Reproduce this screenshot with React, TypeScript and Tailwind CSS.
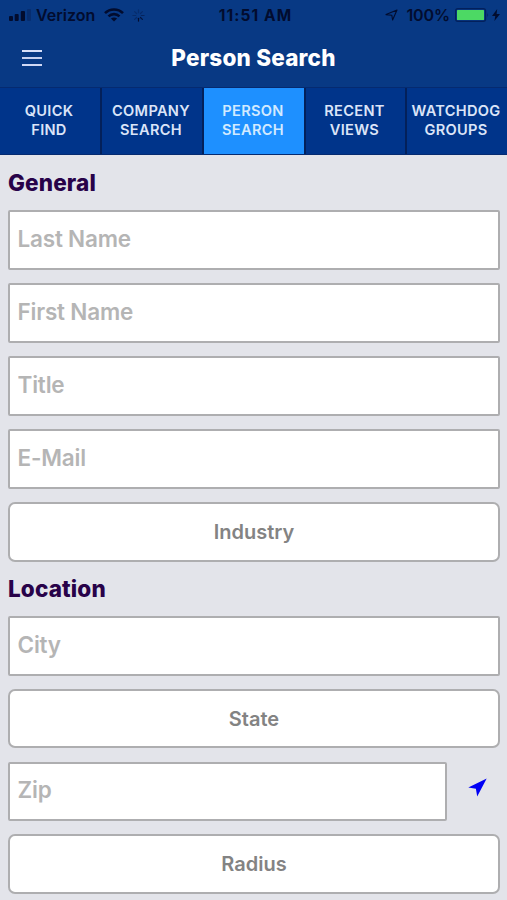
import { useState } from "react";
import clsx from "clsx";

const TABS = [
  ["QUICK", "FIND"],
  ["COMPANY", "SEARCH"],
  ["PERSON", "SEARCH"],
  ["RECENT", "VIEWS"],
  ["WATCHDOG", "GROUPS"],
];

function StatusBar() {
  return (
    <div className="flex h-[30px] items-center text-[#020c2e]">
      <div className="flex flex-1 items-center pl-[9px]">
        <svg width="23" height="12" viewBox="0 0 23 12" fill="currentColor">
          <rect x="0" y="7" width="4" height="5" rx="1" />
          <rect x="5.7" y="5" width="4" height="7" rx="1" />
          <rect x="11.8" y="2" width="4.2" height="10" rx="1" />
          <rect x="18" y="0" width="4" height="12" rx="1" opacity=".25" />
        </svg>
        <span className="ml-[4px] text-[16px] font-semibold">Verizon</span>
        <svg className="ml-[9px]" width="20" height="14" viewBox="0 0 20 14" fill="none" stroke="currentColor" strokeWidth="2.6">
          <path d="M1 5.2C6 .2 14 .2 19 5.2" />
          <path d="M4.5 8.4C7.6 5.4 12.4 5.4 15.5 8.4" />
          <path d="M10 13.6L6.9 10.5C8.6 9 11.4 9 13.1 10.5Z" fill="currentColor" stroke="none" />
        </svg>
        <svg className="ml-[8px]" width="13" height="13" viewBox="0 0 14 14" stroke="currentColor" strokeWidth="1.3" strokeLinecap="round">
          <path d="M7 1V4" opacity=".25" />
          <path d="M11.2 2.8L9.1 4.9" opacity=".3" />
          <path d="M13 7H10" opacity=".45" />
          <path d="M11.2 11.2L9.1 9.1" opacity=".8" />
          <path d="M7 13V10" />
          <path d="M2.8 11.2L4.9 9.1" opacity=".3" />
          <path d="M1 7H4" opacity=".3" />
          <path d="M2.8 2.8L4.9 4.9" opacity=".25" />
        </svg>
      </div>
      <span className="pt-px pl-[2px] text-[15.5px] font-bold tracking-[1.1px]">11:51 AM</span>
      <div className="flex flex-1 items-center justify-end pr-[7px]">
        <svg width="13" height="12" viewBox="0 0 13 12" fill="none" stroke="currentColor" strokeWidth="1.1" strokeLinejoin="round">
          <path d="M12 1L7.6 11L6.8 6.2L1 5.6Z" />
        </svg>
        <span className="ml-[8px] text-[16px] font-semibold tracking-[-0.1px]">100%</span>
        <svg className="ml-[5px]" width="35" height="14" viewBox="0 0 35 14">
          <rect x=".6" y=".6" width="30" height="12.8" rx="2.4" fill="none" stroke="#03205c" strokeWidth="1.2" />
          <rect x="2" y="2" width="27" height="10" rx=".5" fill="#4cd964" />
          <path d="M32.3 4.8Q34 7 32.3 9.2Z" fill="#03205c" />
        </svg>
        <svg className="ml-[2px]" width="8" height="12" viewBox="0 0 8 12" fill="currentColor">
          <path d="M5.2 0L0 6.9H3.3L2.4 12L8 4.9H4.6Z" />
        </svg>
      </div>
    </div>
  );
}

function Field({ label }: { label: string }) {
  return (
    <input
      aria-label={label}
      placeholder={label}
      className="h-[59.5px] w-full min-w-0 rounded-[2px] border-2 border-[#aeaeb0] bg-white px-[7.5px] pb-[3.5px] text-[22.5px] font-semibold tracking-[-0.2px] text-[#555] outline-none placeholder:text-[#b5b5b5]"
    />
  );
}

function PickerButton({ label }: { label: string }) {
  return (
    <button
      type="button"
      className="h-[59.5px] w-full rounded-[7px] border-2 border-[#aeaeb0] bg-white text-[20px] font-semibold text-[#838383]"
    >
      {label}
    </button>
  );
}

function SectionTitle({ children }: { children: string }) {
  return (
    <h2 className="text-[22.5px] leading-[28px] font-extrabold tracking-[0.15px] text-[#280249]">{children}</h2>
  );
}

export default function App() {
  const [active, setActive] = useState(2);

  return (
    <div className="h-[900px] w-[507px] overflow-hidden bg-[#e3e4ea] font-[Inter,sans-serif]">
      <header className="h-[87px] bg-[#083984]">
        <StatusBar />
        <div className="grid h-[56px] grid-cols-[60px_1fr_60px] items-center">
          <button type="button" aria-label="Menu" className="flex flex-col gap-[5px] pl-[22px]">
            <span className="h-[2px] w-[20px] bg-[#d8e0fa]" />
            <span className="h-[2px] w-[20px] bg-[#c8d1f0]" />
            <span className="h-[2px] w-[20px] bg-[#d0d8f5]" />
          </button>
          <h1 className="text-center text-[22.5px] font-extrabold tracking-[0.2px] text-white">Person Search</h1>
        </div>
      </header>

      <nav className="grid h-[68px] grid-cols-[102px_102px_102px_101px_100px] border-y border-[#052a70] bg-[#00348a]">
        {TABS.map(([top, bottom], i) => (
          <button
            key={top}
            type="button"
            onClick={() => setActive(i)}
            className={clsx(
              "flex flex-col items-center justify-center pr-[2px] text-[14.6px] leading-[19px] font-semibold tracking-[0.3px] whitespace-nowrap",
              i < TABS.length - 1 && "border-r-2 border-[#03205a]",
              i === active ? "bg-[#1e90ff] text-[#d2eaff]" : "text-[#dbe4f8]"
            )}
          >
            <span>{top}</span>
            <span>{bottom}</span>
          </button>
        ))}
      </nav>

      <main className="pr-[7px] pl-[8px]">
        <div className="flex h-[55px] items-center">
          <SectionTitle>General</SectionTitle>
        </div>
        <div className="flex flex-col gap-[13.5px]">
          <Field label="Last Name" />
          <Field label="First Name" />
          <Field label="Title" />
          <Field label="E-Mail" />
          <PickerButton label="Industry" />
        </div>

        <div className="flex h-[54.5px] items-center">
          <SectionTitle>Location</SectionTitle>
        </div>
        <div className="flex flex-col gap-[13.25px]">
          <Field label="City" />
          <PickerButton label="State" />
          <div className="flex">
            <Field label="Zip" />
            <button
              type="button"
              aria-label="Use current location"
              className="flex w-[53px] shrink-0 items-center justify-center pb-[8px] pl-[8px]"
            >
              <svg width="19" height="19" viewBox="0 0 19 19" fill="#0000f5">
                <path d="M18.7.4L9.2 18.5L7.9 10.8L.3 9.4Z" />
              </svg>
            </button>
          </div>
          <PickerButton label="Radius" />
        </div>
      </main>
    </div>
  );
}
